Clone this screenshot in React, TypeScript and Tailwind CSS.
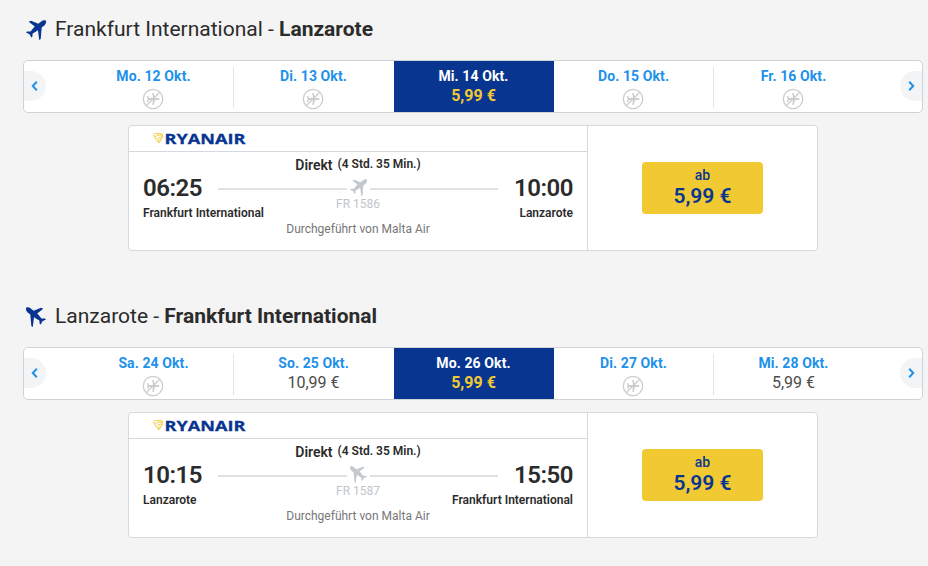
import React from 'react';

interface Day {
  label: string;
  price?: string;
  active?: boolean;
}

interface Flight {
  from: string;
  to: string;
  departure: string;
  arrival: string;
  duration: string;
  flightNo: string;
  operator: string;
  price: string;
  days: Day[];
  inbound?: boolean;
}

const FLIGHTS: Flight[] = [
  {
    from: 'Frankfurt International',
    to: 'Lanzarote',
    departure: '06:25',
    arrival: '10:00',
    duration: '(4 Std. 35 Min.)',
    flightNo: 'FR 1586',
    operator: 'Durchgeführt von Malta Air',
    price: '5,99 €',
    days: [
      { label: 'Mo. 12 Okt.' },
      { label: 'Di. 13 Okt.' },
      { label: 'Mi. 14 Okt.', price: '5,99 €', active: true },
      { label: 'Do. 15 Okt.' },
      { label: 'Fr. 16 Okt.' },
    ],
  },
  {
    from: 'Lanzarote',
    to: 'Frankfurt International',
    departure: '10:15',
    arrival: '15:50',
    duration: '(4 Std. 35 Min.)',
    flightNo: 'FR 1587',
    operator: 'Durchgeführt von Malta Air',
    price: '5,99 €',
    inbound: true,
    days: [
      { label: 'Sa. 24 Okt.' },
      { label: 'So. 25 Okt.', price: '10,99 €' },
      { label: 'Mo. 26 Okt.', price: '5,99 €', active: true },
      { label: 'Di. 27 Okt.' },
      { label: 'Mi. 28 Okt.', price: '5,99 €' },
    ],
  },
];

const PlaneIcon: React.FC<{ className: string; flip?: boolean }> = ({ className, flip }) => (
  <svg viewBox="0 0 20 20" className={`${className} ${flip ? '-scale-x-100' : ''}`} fill="currentColor">
    <path d="M19.700.6C18.4-.2 16.6.2 15.2 1.4L12.300 3.800 5 .8 2.700 1.700 8.800 6.500C7.200 8 5.800 9.800 4.600 11.600L1 11.600 0 12.500 3.600 14.200 5.200 17.600 6.400 16.700 6.600 13.600C8.300 12.700 10.300 11.500 12 10.200L13.200 19.900 14.700 19 15.700 7.600 18.600 5.200C20 3.800 20.600 1.700 19.700.6Z" />
  </svg>
);

const NoFlightIcon = () => (
  <svg viewBox="0 0 22 22" className="h-[22px] w-[22px] text-[#cbcdcf]">
    <circle cx="11" cy="11" r="9.700" fill="none" stroke="currentColor" strokeWidth="1.300" />
    <path fill="currentColor" d="M17.500 11c0-.7-.9-1.100-2-1.100h-2.400L11.600 5h-1.300l.6 4.900H7.200L6 8H5l.6 3L5 14h1l1.200-1.900h3.700l-.6 4.900h1.300l1.500-4.900h2.400c1.100 0 2-.4 2-1.100Z" />
    <path d="M4.200 17.800 17.800 4.200" stroke="currentColor" strokeWidth="1.300" />
  </svg>
);

const Chevron: React.FC<{ right?: boolean }> = ({ right }) => (
  <svg viewBox="0 0 8 10" className={`mb-px h-[10px] w-2 ${right ? '-scale-x-100' : ''}`} fill="none" stroke="#2091eb" strokeWidth="2">
    <path d="M5.800.8 1.800 5l4 4.200" />
  </svg>
);

const RyanairLogo = () => (
  <svg viewBox="0 0 96 18" className="h-[18px] w-[96px]">
    <g fill="none" stroke="#f1c933" strokeWidth="1">
      <path d="M.7 4.700C1.500 3.500 3 3.300 5 3.700c2-.9 4-.3 4.500 1.200C9.700 7.500 8 10 5.700 13 5.500 10.500.7 8.500.7 4.700Z" />
      <path d="M2 7.500c1-2 3.500-2.800 7-2.500M3.500 9.500C5 8 6.500 7 9 7M5 11.300 7.500 9" />
    </g>
    <text x="11.500" y="13.700" textLength="81" lengthAdjust="spacingAndGlyphs" fill="#073590" stroke="#073590" strokeWidth=".3" className="font-['Open_Sans'] text-[14.500px] leading-none font-bold">
      RYANAIR
    </text>
  </svg>
);

const DayBar: React.FC<{ days: Day[] }> = ({ days }) => (
  <div className="flex h-[53px] w-[900px] justify-between overflow-hidden rounded-[5px] border border-[#d0d3d5] bg-white">
    <button className="mb-px flex h-[30px] w-[22px] items-center justify-center self-center rounded-r-full bg-[#f3f4f6]">
      <Chevron />
    </button>
    <div className="ml-[3px] flex w-[800px]">
      {days.map((day, i) => (
        <div
          key={day.label}
          className={`flex w-40 flex-col items-center ${day.active ? 'bg-[#073590]' : ''}`}
        >
          <div className={`mt-[6px] flex h-[41px] w-full flex-col items-center border-r ${i === 0 || i === 3 ? 'border-[#e3e5e7]' : 'border-transparent'}`}>
            <span className={`text-[14px] leading-[18px] font-bold tracking-[0.1px] ${day.active ? 'text-white' : 'text-[#2091eb]'}`}>
              {day.label}
            </span>
            {day.price ? (
              <span className={`mt-px text-[16px] leading-5 ${day.active ? 'font-bold text-[#f1c933]' : 'text-[#4c4c4c]'}`}>
                {day.price}
              </span>
            ) : (
              <span className="mt-[3px] mr-px"><NoFlightIcon /></span>
            )}
          </div>
        </div>
      ))}
    </div>
    <button className="mb-px ml-px flex h-[30px] w-[22px] items-center justify-center self-center rounded-l-full bg-[#f3f4f6]">
      <Chevron right />
    </button>
  </div>
);

const FlightCard: React.FC<{ flight: Flight }> = ({ flight }) => (
  <div className="mt-3 ml-[105px] flex h-[126px] w-[690px] rounded border border-[#d5d8de] bg-white">
    <div className="w-[459px] border-r border-[#d5d8de]">
      <div className="flex h-[26px] items-center border-b border-[#d5d8de] pl-6">
        <RyanairLogo />
      </div>
      <div className="flex px-[14px]">
        <div className="w-[75px] pt-[22px] whitespace-nowrap">
          <div className="text-[24px] leading-[28px] font-semibold tracking-[-0.5px]">{flight.departure}</div>
          <div className="mt-[2px] text-[12px] leading-[18px] font-semibold">{flight.from}</div>
        </div>
        <div className="flex w-[280px] flex-col items-center pt-[4px]">
          <div className="flex gap-[5px] leading-4 font-semibold">
            <span className="pt-px text-[14px]">Direkt</span>
            <span className="text-[12px]">{flight.duration}</span>
          </div>
          <div className="mt-[6px] flex h-[17px] w-full items-center gap-[3px]">
            <div className="mt-[3px] h-[2px] flex-1 bg-[#e0e2e5]" />
            <PlaneIcon className="h-[17px] w-[17px] text-[#c4c9ce]" flip={flight.inbound} />
            <div className="mt-[3px] h-[2px] flex-1 bg-[#e0e2e5]" />
          </div>
          <div className="text-[12px] leading-4 text-[#c0c5cb]">{flight.flightNo}</div>
          <div className="mt-[9px] text-[12px] leading-4 text-[#777]">{flight.operator}</div>
        </div>
        <div className="flex w-[75px] flex-col items-end pt-[22px] whitespace-nowrap">
          <div className="text-[24px] leading-[28px] font-semibold tracking-[-0.5px]">{flight.arrival}</div>
          <div className="mt-[2px] text-[12px] leading-[18px] font-semibold">{flight.to}</div>
        </div>
      </div>
    </div>
    <div className="flex flex-1 items-center justify-center">
      <button className="flex h-[52px] w-[121px] flex-col items-center rounded bg-[#f1c933] pt-[5px] font-medium text-[#073590]">
        <span className="text-[14px] leading-4">ab</span>
        <span className="text-[21px] leading-[26px] font-semibold">{flight.price}</span>
      </button>
    </div>
  </div>
);

const App = () => (
  <main className="h-[566px] w-[928px] overflow-hidden bg-[#f4f4f4] pt-[14px] pl-[23px] font-['Roboto',sans-serif] text-[#2b2b2b]">
    {FLIGHTS.map(flight => (
      <section key={flight.flightNo} className="h-[287px]">
        <div className="mb-4 flex h-[30px] items-center">
          <PlaneIcon className="mt-px ml-[3px] h-5 w-5 text-[#073590]" flip={flight.inbound} />
          <h2 className="ml-[9px] text-[21px] leading-[30px] font-normal">
            {flight.from} - <span className="font-bold">{flight.to}</span>
          </h2>
        </div>
        <DayBar days={flight.days} />
        <FlightCard flight={flight} />
      </section>
    ))}
  </main>
);

export default App;
